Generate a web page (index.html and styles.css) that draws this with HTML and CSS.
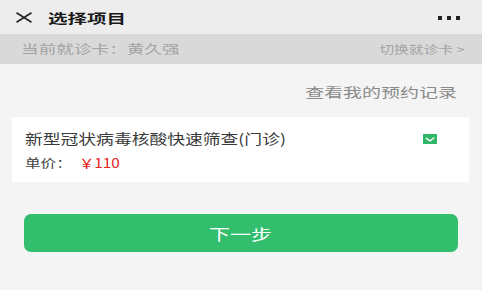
FILE: index.html
```html
<!DOCTYPE html>
<html lang="zh-CN">
<head>
<meta charset="utf-8">
<title>选择项目</title>
<link rel="stylesheet" href="styles.css">
</head>
<body>
  <header class="topbar">
    <svg class="close" width="18" height="11" viewBox="0 0 18 11"><path d="M1.5 0.8 L16.5 10.2 M16.5 0.8 L1.5 10.2" stroke="#222" stroke-width="1.6" fill="none"/></svg>
    <span class="title wide">选择项目</span>
    <span class="more"><i></i><i></i><i></i></span>
  </header>
  <div class="cardbar">
    <span class="cur wide">当前就诊卡：黄久强</span>
    <span class="switch wide">切换就诊卡 &gt;</span>
  </div>
  <div class="records"><span class="wide">查看我的预约记录</span></div>
  <section class="item">
    <div class="row">
      <span class="name wide">新型冠状病毒核酸快速筛查(门诊)</span>
      <svg class="check" width="14" height="10" viewBox="0 0 14 10"><rect width="14" height="10" fill="#2fb766"/><path d="M3.3 4.3 L7 6.8 L10.8 4" stroke="#fff" stroke-width="1.5" fill="none" stroke-linecap="round" stroke-linejoin="round"/></svg>
    </div>
    <div class="price"><span class="label wide">单价：</span><span class="amount wide">￥110</span></div>
  </section>
  <div class="btnwrap"><button class="next"><span class="wide">下一步</span></button></div>
</body>
</html>
```
FILE: styles.css
```css
* { box-sizing: border-box; }
body {
  margin: 0;
  background: #f4f4f5;
  font-family: "Noto Sans CJK SC", "Noto Sans", sans-serif;
  width: 482px;
  height: 290px;
  overflow: hidden;
}
.wide {
  display: inline-block;
  transform-origin: left center;
  white-space: nowrap;
}
.topbar {
  height: 34px;
  background: #ededed;
  display: flex;
  align-items: center;
  padding: 0 22px 0 15px;
}
.close { display: block; margin-top: 1px; }
.title {
  margin-left: 15px;
  font-size: 13px;
  font-weight: 700;
  color: #1a1a1a;
  line-height: 1;
  transform: scaleX(1.5);
}
.more {
  margin-left: auto;
  display: flex;
  gap: 5px;
  margin-top: 1px;
}
.more i {
  display: block;
  width: 4px;
  height: 4px;
  background: #222;
}
.cardbar {
  height: 30px;
  background: #d9d9d9;
  display: flex;
  align-items: center;
  justify-content: space-between;
  padding: 0 17px 0 21px;
  color: #a3a3a3;
}
.cur { font-size: 12px; line-height: 1; transform: scaleX(1.47); }
.switch { font-size: 11px; line-height: 1; transform: scaleX(1.34); transform-origin: right center; }
.records {
  text-align: right;
  padding: 19px 25px 0 0;
  height: 53px;
  font-size: 13px;
  color: #8a8a8a;
  line-height: 18px;
}
.records .wide { transform: scaleX(1.46); transform-origin: right center; }
.item {
  margin: 0 12px 0 12px;
  width: 457px;
  height: 65px;
  background: #fff;
  padding: 12px 0 0 25px;
}
.item { padding-left: 13px; }
.row {
  display: flex;
  align-items: center;
  height: 18px;
}
.name {
  font-size: 14px;
  color: #3a3a3a;
  line-height: 18px;
  transform: scaleX(1.27);
}
.check { margin-left: auto; margin-right: 32px; display: block; margin-top: 1px; }
.price {
  margin-top: 8px;
  font-size: 12px;
  line-height: 16px;
  display: flex;
}
.label { color: #444; width: 54px; transform: scaleX(1.3); }
.amount { color: #e8211a; font-size: 13px; transform: scaleX(1.18); }
.btnwrap { padding: 32px 24px 0 24px; }
.next {
  display: flex;
  align-items: center;
  justify-content: center;
  width: 434px;
  height: 38px;
  border: none;
  border-radius: 7px;
  background: #33be6e;
  color: #fff;
  font-family: inherit;
  font-size: 15px;
  padding: 0;
  line-height: 1;
}
.next .wide { transform: scaleX(1.4); transform-origin: center center; }
```
